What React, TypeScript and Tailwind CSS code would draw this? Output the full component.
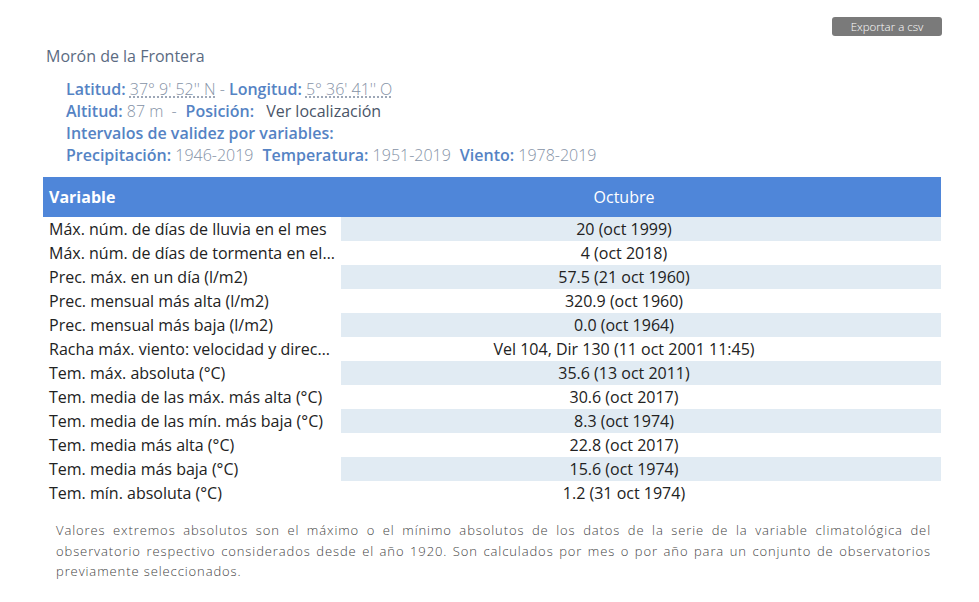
import React from "react";

const rows: [string, string][] = [
  ["Máx. núm. de días de lluvia en el mes", "20 (oct 1999)"],
  ["Máx. núm. de días de tormenta en el mes", "4 (oct 2018)"],
  ["Prec. máx. en un día (l/m2)", "57.5 (21 oct 1960)"],
  ["Prec. mensual más alta (l/m2)", "320.9 (oct 1960)"],
  ["Prec. mensual más baja (l/m2)", "0.0 (oct 1964)"],
  ["Racha máx. viento: velocidad y dirección (km/h, grados)", "Vel 104, Dir 130 (11 oct 2001 11:45)"],
  ["Tem. máx. absoluta (°C)", "35.6 (13 oct 2011)"],
  ["Tem. media de las máx. más alta (°C)", "30.6 (oct 2017)"],
  ["Tem. media de las mín. más baja (°C)", "8.3 (oct 1974)"],
  ["Tem. media más alta (°C)", "22.8 (oct 2017)"],
  ["Tem. media más baja (°C)", "15.6 (oct 1974)"],
  ["Tem. mín. absoluta (°C)", "1.2 (31 oct 1974)"],
];

const L = "font-semibold text-[#5583c4]";

export default function App() {
  return (
    <div className="w-[979px] h-[602px] bg-white font-['Open_Sans',sans-serif] relative">
      <div className="flex justify-end pt-[17px] pr-[37px]">
        <button className="w-[110px] h-[19px] rounded-[3px] bg-[#7a7a7a] text-white text-[11.5px] leading-[19px] font-light">
          Exportar a csv
        </button>
      </div>
      <div className="pl-[46px] mt-[9px] text-[16px] text-[#5b6b82] leading-[22px]">Morón de la Frontera</div>
      <div className="pl-[66px] mt-[11px] text-[16px] leading-[22px] text-[#8592a6] font-light">
        <div>
          <span className={L}>Latitud:</span>{" "}
          <span className="underline decoration-dotted underline-offset-2">37° 9' 52'' N</span>{" "}
          - <span className={L}>Longitud:</span>{" "}
          <span className="underline decoration-dotted underline-offset-2">5° 36' 41'' O</span>
        </div>
        <div>
          <span className={L}>Altitud:</span> 87 m<span className="ml-[8px]">-</span>
          <span className={L + " ml-[9px]"}>Posición:</span>
          <span className="text-[#4a5568] font-normal ml-[12px]">Ver localización</span>
        </div>
        <div className={L}>Intervalos de validez por variables:</div>
        <div>
          <span className={L}>Precipitación:</span> 1946-2019
          <span className={L + " ml-[9px]"}>Temperatura:</span> 1951-2019
          <span className={L + " ml-[9px]"}>Viento:</span> 1978-2019
        </div>
      </div>
      <div className="ml-[43px] w-[898px] mt-[11px]">
        <div className="flex h-[40px] bg-[#4f86d9] text-white text-[16px] items-center">
          <div className="w-[298px] pl-[6px] font-bold">Variable</div>
          <div className="flex-1 text-center pr-[34px]">Octubre</div>
        </div>
        {rows.map(([v, val], i) => (
          <div key={i} className="flex h-[24px] text-[16px] leading-[24px] text-[#222]">
            <div className="w-[298px] pl-[6px] pr-[4px] truncate">{v}</div>
            <div className={"flex-1 text-center pr-[34px] " + (i % 2 === 0 ? "bg-[#e1ebf3]" : "")}>{val}</div>
          </div>
        ))}
      </div>
      <p className="ml-[56px] w-[875px] mt-[15px] text-[13px] leading-[20.5px] tracking-[0.9px] text-[#444] font-light text-justify">
        Valores extremos absolutos son el máximo o el mínimo absolutos de los datos de la serie de la variable climatológica del observatorio respectivo considerados desde el año 1920. Son calculados por mes o por año para un conjunto de observatorios previamente seleccionados.
      </p>
    </div>
  );
}
